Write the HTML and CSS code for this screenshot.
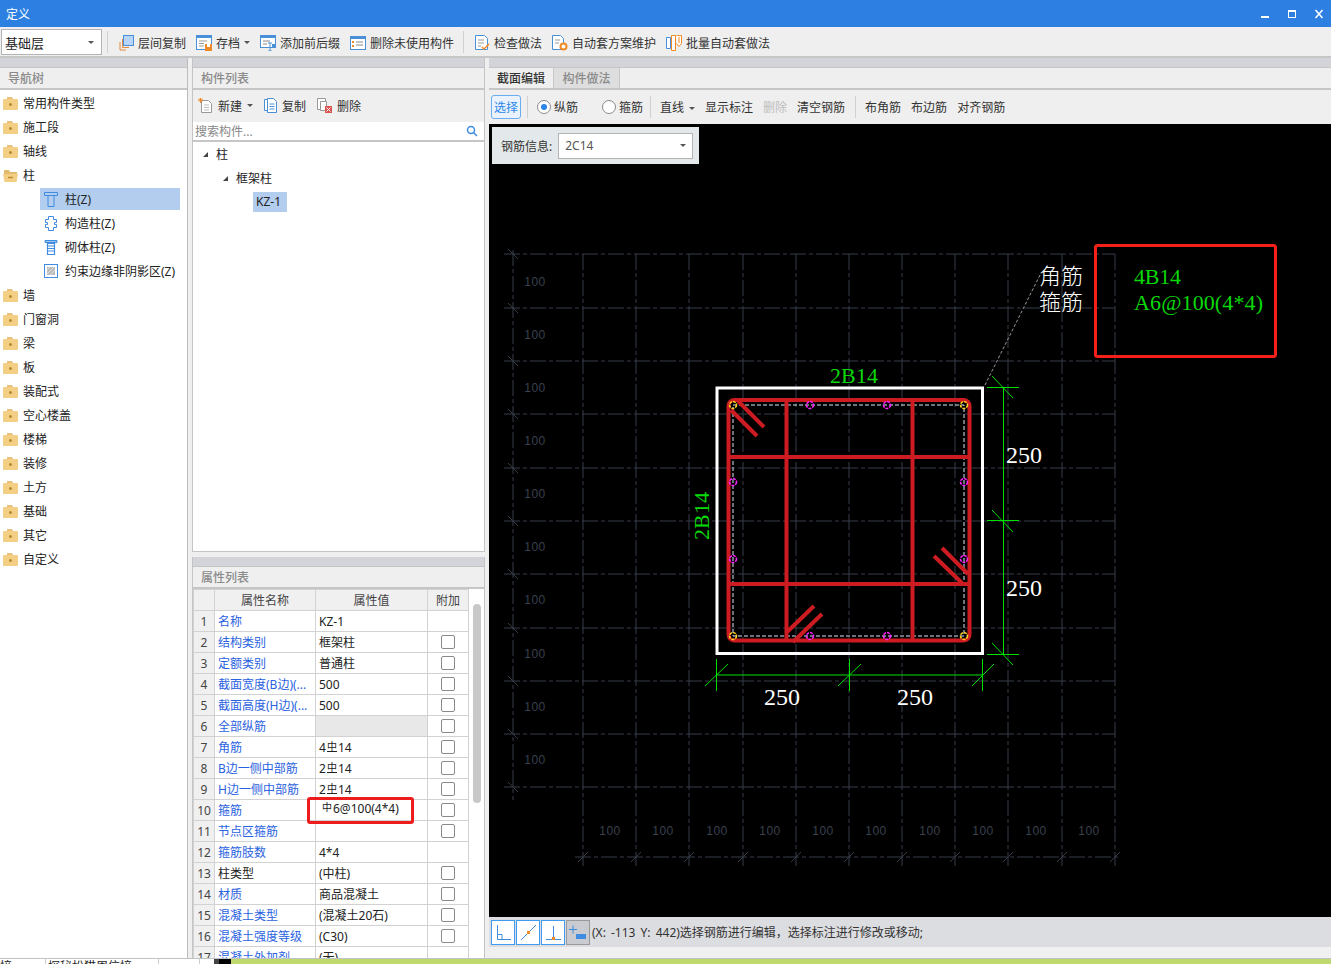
FILE: index.html
```html
<!DOCTYPE html>
<html lang="zh-CN">
<head>
    <meta charset="UTF-8">
    <title>定义</title>
    <link rel="stylesheet" href="styles.css">
</head>
<body>
    <!-- shared icons -->
    <svg class="defs" width="0" height="0">
        <symbol id="folder-plus" viewBox="0 0 15 13"><path d="M4 0h5l1 2H4z" fill="#e8c078"/><rect x="0" y="2" width="15" height="11" rx="1" fill="#f3cf86"/><path d="M6 7.500h3M7.500 6v3" stroke="#b98a2e" stroke-width="1.500"/></symbol>
        <symbol id="folder-minus" viewBox="0 0 15 13"><path d="M1 1h5l1 2h7v2H1z" fill="#e3b96e"/><path d="M0 5h15l-1.500 8h-12z" fill="#f3cf86"/><path d="M5 8.500h5" stroke="#b98a2e" stroke-width="1.500"/></symbol>
    </svg>

    <header class="titlebar">
        <span>定义</span>
        <div class="win-btns">
            <svg width="10" height="10" viewBox="0 0 10 10"><rect x="1" y="7" width="8" height="2" fill="#fff"/></svg>
            <svg width="10" height="10" viewBox="0 0 10 10"><rect x="1.500" y="1.500" width="7" height="7" fill="none" stroke="#fff"/><rect x="1" y="1" width="8" height="2" fill="#fff"/></svg>
            <svg width="10" height="10" viewBox="0 0 10 10"><path d="M1.500 1l7 8M8.500 1l-7 8" stroke="#fff" stroke-width="1.500"/></svg>
        </div>
    </header>

    <div class="main-toolbar">
        <div class="combo floor">基础层<i class="caret"></i></div>
        <span class="sep"></span>
        <div class="tool first">
            <svg width="15" height="16" viewBox="0 0 15 16"><path d="M3.500 4v8.500H10M1 7v8h6" fill="none" stroke="#e58a3c"/><rect x="4.500" y="0.500" width="10" height="10" fill="#b8d4f6" stroke="#4a90d9"/></svg>
            层间复制
        </div>
        <div class="tool">
            <svg width="16" height="16" viewBox="0 0 16 16"><rect x="0.500" y="0.500" width="15" height="14" fill="#fff" stroke="#4a90d9"/><rect x="0" y="0" width="16" height="3" fill="#4a90d9"/><path d="M3 6h8M3 8.500h5M3 11h5" stroke="#999"/><rect x="9" y="9" width="7" height="7" fill="#f08a24"/><rect x="11" y="9" width="3" height="3" fill="#fff"/></svg>
            存档<i class="caret"></i>
        </div>
        <div class="tool">
            <svg width="16" height="16" viewBox="0 0 16 16"><rect x="0.500" y="0.500" width="15" height="12" fill="#fff" stroke="#4a90d9"/><rect x="0" y="0" width="16" height="3" fill="#4a90d9"/><path d="M3 6h7M3 9h4" stroke="#888"/><path d="M8 8h4M10 8v8M8 16h4" stroke="#4a90d9"/><rect x="12" y="9" width="4" height="4" fill="#4a90d9"/></svg>
            添加前后缀
        </div>
        <div class="tool">
            <svg width="16" height="14" viewBox="0 0 16 14"><rect x="0.500" y="0.500" width="15" height="13" fill="#fff" stroke="#4a90d9"/><rect x="0" y="0" width="16" height="3" fill="#4a90d9"/><path d="M6 6h7M6 9h7" stroke="#888"/><rect x="2" y="5" width="2" height="2" fill="#f08a24"/><rect x="2" y="9" width="2" height="2" fill="#f08a24"/></svg>
            删除未使用构件
        </div>
        <span class="sep sep-tight"></span>
        <div class="tool first">
            <svg width="15" height="16" viewBox="0 0 15 16"><path d="M0.500 0.500h9l3 3v11h-12z" fill="#fff" stroke="#4a90d9"/><path d="M3 5h6M3 8h6M3 11h3" stroke="#999"/><path d="M7 12l2 2 5-5" fill="none" stroke="#f08a24" stroke-width="1.500"/></svg>
            检查做法
        </div>
        <div class="tool">
            <svg width="16" height="16" viewBox="0 0 16 16"><path d="M0.500 0.500h8l3 3v11h-11z" fill="#fff" stroke="#4a90d9"/><path d="M3 5h5M3 8h4" stroke="#999"/><circle cx="11.500" cy="11.500" r="3" fill="#fff" stroke="#f08a24" stroke-width="2"/></svg>
            自动套方案维护
        </div>
        <div class="tool">
            <svg width="16" height="16" viewBox="0 0 16 16"><path d="M0.500 2.500h4v11h-4z" fill="#fff" stroke="#4a90d9"/><path d="M5.500 0.500h4v15h-4z" fill="#fff" stroke="#f08a24"/><path d="M10.500 0.500h5v8l-2.500 3-2.500-3" fill="#fff" stroke="#f08a24"/><path d="M13 2v6" stroke="#f08a24"/></svg>
            批量自动套做法
        </div>
    </div>

    <div class="workspace">
        <aside class="col-nav">
            <div class="strip"></div>
            <div class="panel-title">导航树</div>
            <ul class="nav-tree">
                <li><svg class="fold" width="15" height="13"><use href="#folder-plus"/></svg>常用构件类型</li>
                <li><svg class="fold" width="15" height="13"><use href="#folder-plus"/></svg>施工段</li>
                <li><svg class="fold" width="15" height="13"><use href="#folder-plus"/></svg>轴线</li>
                <li><svg class="fold" width="15" height="13"><use href="#folder-minus"/></svg>柱</li>
                <li class="child"><div class="child-in selected">
                    <svg width="14" height="15" viewBox="0 0 14 15"><path d="M0.500 0.500h13v3h-13zM3.500 3.500h7M4 3.500v11h6v-11" fill="none" stroke="#3f8ce0"/></svg>柱(Z)</div></li>
                <li class="child"><div class="child-in">
                    <svg width="14" height="15" viewBox="0 0 14 15"><path d="M4.500 0.500h5v3h3v3h-2v2h2v3h-3v3h-5v-3h-3v-3h2v-2h-2v-3h3z" fill="#fff" stroke="#3f8ce0"/></svg>构造柱(Z)</div></li>
                <li class="child"><div class="child-in">
                    <svg width="14" height="15" viewBox="0 0 14 15"><path d="M1 1h12M3.500 3.500h7v11h-7z" fill="none" stroke="#3f8ce0" stroke-width="1.200"/><path d="M1 0.500h12v2H1zM4 6h6M4 8.500h6M4 11h6" fill="none" stroke="#3f8ce0"/></svg>砌体柱(Z)</div></li>
                <li class="child"><div class="child-in">
                    <svg width="14" height="14" viewBox="0 0 14 14"><rect x="0.500" y="0.500" width="13" height="13" fill="#fff" stroke="#3f8ce0"/><rect x="3" y="3" width="8" height="8" fill="#bbb"/><path d="M3 6l3-3M3 10l7-7M6 11l5-5" stroke="#eee" stroke-width="0.700"/></svg>约束边缘非阴影区(Z)</div></li>
                <li><svg class="fold" width="15" height="13"><use href="#folder-plus"/></svg>墙</li>
                <li><svg class="fold" width="15" height="13"><use href="#folder-plus"/></svg>门窗洞</li>
                <li><svg class="fold" width="15" height="13"><use href="#folder-plus"/></svg>梁</li>
                <li><svg class="fold" width="15" height="13"><use href="#folder-plus"/></svg>板</li>
                <li><svg class="fold" width="15" height="13"><use href="#folder-plus"/></svg>装配式</li>
                <li><svg class="fold" width="15" height="13"><use href="#folder-plus"/></svg>空心楼盖</li>
                <li><svg class="fold" width="15" height="13"><use href="#folder-plus"/></svg>楼梯</li>
                <li><svg class="fold" width="15" height="13"><use href="#folder-plus"/></svg>装修</li>
                <li><svg class="fold" width="15" height="13"><use href="#folder-plus"/></svg>土方</li>
                <li><svg class="fold" width="15" height="13"><use href="#folder-plus"/></svg>基础</li>
                <li><svg class="fold" width="15" height="13"><use href="#folder-plus"/></svg>其它</li>
                <li><svg class="fold" width="15" height="13"><use href="#folder-plus"/></svg>自定义</li>
            </ul>
        </aside>

        <section class="col-mid">
            <div class="list-panel">
                <div class="strip"></div>
                <div class="panel-title">构件列表</div>
                <div class="list-tools">
                    <div class="tool">
                        <svg width="15" height="15" viewBox="0 0 15 15"><path d="M3.500 2.500h7l3 3v9h-10z" fill="#fff" stroke="#999"/><path d="M6 7h5M6 9.500h5M6 12h5" stroke="#bbb"/><path d="M0 2h5M2.500 0v5M1 .5l3 3M4 .5l-3 3" stroke="#f08a24"/></svg>
                        新建<i class="caret"></i>
                    </div>
                    <div class="tool">
                        <svg width="13" height="15" viewBox="0 0 13 15"><path d="M0.500 1.500h3v11h-3z" fill="#fff" stroke="#4a90d9"/><path d="M3.500 0.500h6l3 3v11h-9z" fill="#fff" stroke="#4a90d9"/><path d="M5.500 6h5M5.500 8.500h5M5.500 11h5" stroke="#4a90d9"/></svg>
                        复制
                    </div>
                    <div class="tool">
                        <svg width="15" height="15" viewBox="0 0 15 15"><path d="M0.500 0.500h8v11h-8z" fill="#fff" stroke="#999"/><path d="M3.500 3.500h6v9h-6z" fill="#fff" stroke="#999"/><rect x="8" y="8" width="7" height="7" fill="#d9534f"/><path d="M9.500 9.500l4 4M13.500 9.500l-4 4" stroke="#fff"/></svg>
                        删除
                    </div>
                </div>
                <div class="search">
                    <span>搜索构件...</span>
                    <svg width="12" height="12" viewBox="0 0 12 12"><circle cx="5" cy="5" r="3.500" fill="none" stroke="#3f8ce0" stroke-width="1.500"/><path d="M7.500 7.500l3.500 3.500" stroke="#3f8ce0" stroke-width="1.500"/></svg>
                </div>
                <ul class="part-tree">
                    <li class="lv1"><i class="tri"></i>柱</li>
                    <li class="lv2"><i class="tri"></i>框架柱</li>
                    <li class="lv3"><span class="selected">KZ-1</span></li>
                </ul>
            </div>

            <div class="attr-panel">
                <div class="strip"></div>
                <div class="panel-title">属性列表</div>
                <div class="attr-body">
                    <table class="attr-table">
                        <colgroup><col class="c-no"><col class="c-name"><col class="c-val"><col class="c-add"></colgroup>
                        <thead>
                            <tr><th></th><th>属性名称</th><th>属性值</th><th>附加</th></tr>
                        </thead>
                        <tbody>
                            <tr><td class="no">1</td><td class="link">名称</td><td>KZ-1</td><td></td></tr>
                            <tr><td class="no">2</td><td class="link">结构类别</td><td>框架柱</td><td><input type="checkbox"></td></tr>
                            <tr><td class="no">3</td><td class="link">定额类别</td><td>普通柱</td><td><input type="checkbox"></td></tr>
                            <tr><td class="no">4</td><td class="link">截面宽度(B边)(...</td><td>500</td><td><input type="checkbox"></td></tr>
                            <tr><td class="no">5</td><td class="link">截面高度(H边)(...</td><td>500</td><td><input type="checkbox"></td></tr>
                            <tr><td class="no">6</td><td class="link">全部纵筋</td><td class="off"></td><td><input type="checkbox"></td></tr>
                            <tr><td class="no">7</td><td class="link">角筋</td><td>4<span class="bar-b">中</span>14</td><td><input type="checkbox"></td></tr>
                            <tr><td class="no">8</td><td class="link">B边一侧中部筋</td><td>2<span class="bar-b">中</span>14</td><td><input type="checkbox"></td></tr>
                            <tr><td class="no">9</td><td class="link">H边一侧中部筋</td><td>2<span class="bar-b">中</span>14</td><td><input type="checkbox"></td></tr>
                            <tr><td class="no">10</td><td class="link">箍筋</td><td class="raised"><span class="bar-a">中</span>6@100(4*4)</td><td><input type="checkbox"></td></tr>
                            <tr><td class="no">11</td><td class="link">节点区箍筋</td><td></td><td><input type="checkbox"></td></tr>
                            <tr><td class="no">12</td><td class="link">箍筋肢数</td><td>4*4</td><td></td></tr>
                            <tr><td class="no">13</td><td>柱类型</td><td>(中柱)</td><td><input type="checkbox"></td></tr>
                            <tr><td class="no">14</td><td class="link">材质</td><td>商品混凝土</td><td><input type="checkbox"></td></tr>
                            <tr><td class="no">15</td><td class="link">混凝土类型</td><td>(混凝土20石)</td><td><input type="checkbox"></td></tr>
                            <tr><td class="no">16</td><td class="link">混凝土强度等级</td><td>(C30)</td><td><input type="checkbox"></td></tr>
                            <tr><td class="no">17</td><td class="link">混凝土外加剂</td><td>(无)</td><td></td></tr>
                        </tbody>
                    </table>
                    <div class="hl-box"></div>
                    <div class="scroll-thumb"></div>
                </div>
            </div>
        </section>

        <section class="col-edit">
            <div class="strip"></div>
            <div class="tabs">
                <div class="tab active">截面编辑</div>
                <div class="tab">构件做法</div>
            </div>
            <div class="edit-tools">
                <button class="btn-select">选择</button>
                <span class="sep"></span>
                <label class="radio w-first"><i class="dot on"></i>纵筋</label>
                <label class="radio"><i class="dot"></i>箍筋</label>
                <span class="sep"></span>
                <div class="cmd">直线<i class="caret"></i></div>
                <div class="cmd">显示标注</div>
                <div class="cmd disabled">删除</div>
                <div class="cmd">清空钢筋</div>
                <span class="sep sep-flush"></span>
                <div class="cmd">布角筋</div>
                <div class="cmd">布边筋</div>
                <div class="cmd">对齐钢筋</div>
            </div>

            <div class="canvas">
                <svg class="drawing" viewBox="489 124 842 793" width="842" height="793">
                    <!-- axis grid -->
                    <g class="grid">
                        <path d="M504 254H1115M504 308H1115M504 361H1115M504 414H1115M504 468H1115M504 521H1115M504 574H1115M504 628H1115M504 681H1115M504 734H1115M504 787H1115"/>
                        <path d="M513 250V800M583 254V866M636 254V866M689 254V866M743 254V866M796 254V866M849 254V866M902 254V866M955 254V866M1008 254V866M1062 254V866M1115 254V866"/>
                        <path d="M575 857H1118"/>
                    </g>
                    <path class="ticks" d="M508 249l10 10M508 303l10 10M508 356l10 10M508 409l10 10M508 463l10 10M508 516l10 10M508 569l10 10M508 623l10 10M508 676l10 10M508 729l10 10M508 782l10 10M578 862l10-10M631 862l10-10M684 862l10-10M738 862l10-10M791 862l10-10M844 862l10-10M897 862l10-10M950 862l10-10M1003 862l10-10M1057 862l10-10M1110 862l10-10"/>
                    <g class="grid-num">
                        <text x="535" y="286">100</text><text x="535" y="339">100</text><text x="535" y="392">100</text><text x="535" y="445">100</text><text x="535" y="498">100</text><text x="535" y="551">100</text><text x="535" y="604">100</text><text x="535" y="658">100</text><text x="535" y="711">100</text><text x="535" y="764">100</text>
                        <text x="610" y="835">100</text><text x="663" y="835">100</text><text x="717" y="835">100</text><text x="770" y="835">100</text><text x="823" y="835">100</text><text x="876" y="835">100</text><text x="930" y="835">100</text><text x="983" y="835">100</text><text x="1036" y="835">100</text><text x="1089" y="835">100</text>
                    </g>

                    <!-- section -->
                    <rect class="outline" x="717" y="388" width="265.500" height="265.500"/>
                    <rect class="cover" x="733" y="405" width="231" height="231"/>
                    <g class="rebar">
                        <rect x="728.500" y="400" width="241" height="240.500" rx="6"/>
                        <path d="M786.500 400V640M912.500 400V640M728 457H970M728 584H970"/>
                        <path d="M738 401l26 26M731 410l26 26"/>
                        <path d="M942 548l26 26M934 556l28 27"/>
                        <path d="M787 632l27-26M793 642l29-28"/>
                    </g>
                    <g class="dots corner">
                        <circle cx="733" cy="405" r="3.500"/><circle cx="964" cy="405" r="3.500"/><circle cx="733" cy="636" r="3.500"/><circle cx="964" cy="636" r="3.500"/>
                    </g>
                    <g class="dots side">
                        <circle cx="810" cy="405" r="3.500"/><circle cx="887" cy="405" r="3.500"/><circle cx="810" cy="636" r="3.500"/><circle cx="887" cy="636" r="3.500"/><circle cx="733" cy="482" r="3.500"/><circle cx="964" cy="482" r="3.500"/><circle cx="733" cy="559" r="3.500"/><circle cx="964" cy="559" r="3.500"/>
                    </g>

                    <!-- dimensions -->
                    <path class="dim" d="M1003.500 387V654M987 387.500H1019M987 520.500H1019M987 654.500H1019M992 376l21 22M992 510l21 22M992 643l21 22M716 675H983M716.500 659V691M849.500 659V691M982.500 659V691M705 686l23-22M838 686l23-22M972 686l22-22"/>
                    <text class="dim-w" x="782" y="705" text-anchor="middle">250</text>
                    <text class="dim-w" x="915" y="705" text-anchor="middle">250</text>
                    <text class="dim-w" x="1006" y="463">250</text>
                    <text class="dim-w" x="1006" y="596">250</text>
                    <text class="dim-g" x="830" y="383" textLength="48">2B14</text>
                    <text class="dim-g" transform="translate(709,540) rotate(-90)" textLength="48">2B14</text>

                    <!-- leader and note -->
                    <path class="leader" d="M985 385L1040 275"/>
                    <text class="note"><tspan x="1039" y="284">角筋</tspan><tspan x="1039" y="310">箍筋</tspan></text>
                    <text class="dim-g"><tspan x="1134" y="284" textLength="47">4B14</tspan><tspan x="1134" y="310" textLength="129">A6@100(4*4)</tspan></text>
                    <rect class="callout" x="1095.500" y="245.500" width="180" height="111" rx="2"/>
                </svg>
                <div class="bar-info">
                    <span>钢筋信息:</span>
                    <div class="combo bar-combo">2C14<i class="caret"></i></div>
                </div>
            </div>

            <div class="status">
                <div class="snap">
                    <svg width="24" height="25" viewBox="0 0 24 25"><path d="M6.500 5V19.500H20M6.500 14.500H11V19.500" fill="none" stroke="#3f8ce0"/></svg>
                </div>
                <div class="snap">
                    <svg width="24" height="25" viewBox="0 0 24 25"><path d="M5 20L20 5" stroke="#3f8ce0"/><rect x="11" y="11" width="3" height="3" fill="#f08a24"/></svg>
                </div>
                <div class="snap">
                    <svg width="24" height="25" viewBox="0 0 24 25"><path d="M12.500 6V19.500M5 19.500H20" stroke="#3f8ce0"/><rect x="11" y="17" width="3" height="3" fill="#f08a24"/></svg>
                </div>
                <div class="snap snap-on">
                    <svg width="24" height="25" viewBox="0 0 24 25"><path d="M3 9.500H11M7 5.500V13.500" stroke="#3f8ce0"/><rect x="10" y="14" width="10" height="5" fill="#3f8ce0"/></svg>
                </div>
                <span class="status-text">(X: -113 Y: 442)选择钢筋进行编辑，选择标注进行修改或移动;</span>
            </div>
            <div class="status-pad"></div>
        </section>
    </div>

    <footer class="taskbar">
        <div class="task-white">
            <span class="t1">信接</span>
            <span class="t2">探秘松猫周信接...</span>
            <span class="t3"></span>
        </div>
        <div class="task-dark"></div>
    </footer>
</body>
</html>
```

FILE: styles.css
```css
* {
    margin: 0;
    padding: 0;
    box-sizing: border-box;
}

html, body {
    width: 1331px;
    height: 964px;
    overflow: hidden;
}

body {
    display: flex;
    flex-direction: column;
    font-family: "Noto Sans", "Noto Sans CJK SC", "Liberation Sans", sans-serif;
    font-size: 12px;
    color: #333;
    background: #efefef;
}

ul {
    list-style: none;
}

.defs {
    position: absolute;
}

/* title bar */
.titlebar {
    height: 27px;
    flex: none;
    background: #2d7fe2;
    color: #fff;
    display: flex;
    align-items: center;
    justify-content: space-between;
    padding: 0 7px 0 6px;
}

.win-btns {
    display: flex;
    gap: 17px;
}

/* top toolbar */
.main-toolbar {
    height: 31px;
    flex: none;
    display: flex;
    align-items: center;
    padding: 1px 0 0 1px;
    border-bottom: 2px solid #c6c6c6;
    background: #efefef;
}

.sep {
    width: 1px;
    height: 22px;
    background: #d0d0d0;
    flex: none;
}

.main-toolbar .sep {
    margin: 0 11px 0 5px;
}

.main-toolbar .sep-tight {
    margin-left: -1px;
}

.tool {
    display: flex;
    align-items: center;
    gap: 4px;
    margin-right: 10px;
    padding-top: 1px;
    white-space: nowrap;
}

.caret {
    display: inline-block;
    width: 0;
    height: 0;
    border: 3px solid transparent;
    border-top: 3px solid #555;
    border-bottom: 0;
}

.combo {
    display: flex;
    align-items: center;
    justify-content: space-between;
    background: #fff;
    border: 1px solid #b4b4b4;
}

.floor {
    width: 101px;
    height: 26px;
    padding: 0 7px 0 3px;
    font-size: 13px;
    color: #222;
}

/* workspace columns */
.workspace {
    flex: 1;
    min-height: 0;
    display: flex;
}

.col-nav {
    width: 188px;
    flex: none;
    display: flex;
    flex-direction: column;
    border-right: 1px solid #bdbdbd;
}

.col-mid {
    width: 293px;
    margin-left: 4px;
    flex: none;
    display: flex;
    flex-direction: column;
    gap: 5px;
}

.col-edit {
    width: 842px;
    margin-left: 4px;
    flex: none;
    display: flex;
    flex-direction: column;
}

.strip {
    height: 10px;
    flex: none;
    background: #d3d4d9;
    border-bottom: 1px solid #c4c4c4;
}

.panel-title {
    height: 22px;
    flex: none;
    padding: 0 0 0 8px;
    line-height: 22px;
    color: #8b8b8b;
    font-weight: 500;
    border-bottom: 2px solid #c6c6c6;
    background: #efefef;
}

/* navigation tree */
.nav-tree {
    flex: 1;
    background: #fff;
    padding-top: 1px;
}

.nav-tree li {
    height: 24px;
    display: flex;
    align-items: center;
    gap: 5px;
    padding-left: 3px;
    color: #222;
}

.nav-tree li.child {
    padding-left: 40px;
}

.child-in {
    width: 140px;
    height: 22px;
    padding-left: 4px;
    display: flex;
    align-items: center;
    gap: 7px;
    white-space: nowrap;
}

.selected {
    background: #b2cdee;
}

/* part list */
.list-panel {
    height: 494px;
    flex: none;
    display: flex;
    flex-direction: column;
    border: solid #c4c4c4;
    border-width: 0 1px 1px;
}

.list-tools {
    height: 31px;
    flex: none;
    display: flex;
    align-items: center;
    padding-left: 5px;
    gap: 2px;
}

.list-tools .tool {
    gap: 5px;
    margin-right: 9px;
    padding-top: 0;
}

.search {
    height: 20px;
    flex: none;
    margin-top: 1px;
    background: #fff;
    border-bottom: 2px solid #c6c6c6;
    display: flex;
    align-items: center;
    justify-content: space-between;
    padding: 0 6px 0 2px;
    color: #888;
}

.part-tree {
    flex: 1;
    background: #fff;
    color: #222;
}

.part-tree li {
    height: 24px;
    display: flex;
    align-items: center;
}

.tri {
    width: 0;
    height: 0;
    margin-right: 8px;
    border-left: 5px solid transparent;
    border-bottom: 5px solid #444;
}

.lv1 {
    padding-left: 10px;
}

.lv2 {
    padding-left: 30px;
}

.lv3 {
    padding-left: 60px;
}

.lv3 .selected {
    width: 34px;
    height: 20px;
    line-height: 20px;
    padding-left: 3px;
}

/* attribute table */
.attr-panel {
    flex: 1;
    min-height: 0;
    display: flex;
    flex-direction: column;
    border: solid #c4c4c4;
    border-width: 0 1px;
}

.attr-body {
    flex: 1;
    min-height: 0;
    position: relative;
    overflow: hidden;
    background: #fff;
}

.attr-table {
    width: 275px;
    table-layout: fixed;
    border-collapse: collapse;
    color: #222;
}

.c-no { width: 21px; }
.c-name { width: 101px; }
.c-val { width: 112px; }
.c-add { width: 41px; }

.attr-table th,
.attr-table td {
    height: 21px;
    border: 1px solid #d2d2d2;
    padding: 0 0 0 3px;
    white-space: nowrap;
    overflow: hidden;
    font-weight: 400;
}

.attr-table th {
    background: #f0f0f0;
    text-align: center;
    padding: 0;
    color: #444;
}

.attr-table td.no {
    background: #f0f0f0;
    text-align: center;
    padding: 0;
    color: #444;
}

.attr-table td.link {
    color: #2a62e0;
}

.attr-table td.off {
    background: #e8e8e8;
}

.attr-table td:last-child {
    padding: 0;
}

.attr-table td.raised {
    padding-left: 5px;
    padding-bottom: 3px;
}

.attr-table input {
    appearance: none;
    display: block;
    width: 14px;
    height: 14px;
    margin: 0 auto;
    background: #fff;
    border: 1px solid #8a8a8a;
    border-radius: 2px;
}

.bar-b,
.bar-a {
    display: inline-block;
    font-size: 10px;
    line-height: 10px;
    margin: 0 1px;
    vertical-align: 2px;
}

.bar-b {
    border-bottom: 1px solid #222;
    height: 11px;
}

.hl-box {
    position: absolute;
    left: 114px;
    top: 208px;
    width: 107px;
    height: 27px;
    border: 3px solid #ee1c1c;
    border-radius: 3px;
}

.scroll-thumb {
    position: absolute;
    left: 280px;
    top: 15px;
    width: 8px;
    height: 199px;
    border-radius: 4px;
    background: #c8c8c8;
}

/* section editor */
.tabs {
    height: 22px;
    flex: none;
    display: flex;
    border-bottom: 2px solid #c6c6c6;
}

.tab {
    width: 66px;
    text-align: center;
    line-height: 21px;
    font-weight: 500;
    color: #8b8b8b;
    background: #dedede;
    border-right: 1px solid #c8c8c8;
}

.tab.active {
    width: 65px;
    color: #333;
    background: #efefef;
}

.edit-tools {
    height: 34px;
    flex: none;
    display: flex;
    align-items: center;
    padding-left: 2px;
    color: #333;
}

.edit-tools .sep {
    margin: 0 9px 0 6px;
}

.edit-tools .sep-flush {
    margin-left: 0;
}

.btn-select {
    width: 30px;
    height: 24px;
    font: inherit;
    color: #2a86e8;
    background: #eaf3fd;
    border: 1px solid #6aaef0;
    border-radius: 3px;
}

.radio {
    display: flex;
    align-items: center;
    gap: 3px;
    margin-right: 1px;
}

.radio.w-first {
    margin-right: 24px;
}

.dot {
    width: 14px;
    height: 14px;
    border-radius: 50%;
    border: 1px solid #8a8a8a;
    background: #fff;
    position: relative;
}

.dot.on::after {
    content: "";
    position: absolute;
    left: 3px;
    top: 3px;
    width: 6px;
    height: 6px;
    border-radius: 50%;
    background: #2a86e8;
}

.cmd {
    margin-right: 10px;
    white-space: nowrap;
}

.cmd .caret {
    margin-left: 5px;
    vertical-align: 2px;
}

.disabled {
    color: #bdbdbd;
}

.canvas {
    flex: 1;
    min-height: 0;
    position: relative;
    background: #000;
}

.drawing {
    display: block;
}

.grid path {
    fill: none;
    stroke: #363c4a;
    stroke-dasharray: 16 3 4 3;
}

.ticks {
    fill: none;
    stroke: #363c4a;
}

.grid-num text {
    font-family: "Liberation Sans", sans-serif;
    font-size: 12px;
    letter-spacing: 0.5px;
    fill: #3a404e;
    text-anchor: middle;
}

.outline {
    fill: none;
    stroke: #fff;
    stroke-width: 3;
}

.cover {
    fill: none;
    stroke: #d8e6f5;
    stroke-dasharray: 4 2;
}

.rebar {
    fill: none;
    stroke: #cc1c22;
    stroke-width: 4;
}

.dots circle {
    fill: none;
    stroke-width: 1.600;
    stroke-dasharray: 3 1;
}

.corner circle {
    stroke: #ffd21f;
}

.side circle {
    stroke: #ff20ff;
}

.dim {
    fill: none;
    stroke: #00e000;
}

.dim-w {
    font-family: "Liberation Serif", serif;
    font-size: 24px;
    fill: #fff;
}

.dim-g {
    font-family: "Liberation Serif", serif;
    font-size: 22px;
    fill: #0ad80a;
}

.note {
    font-size: 22px;
    font-weight: 300;
    fill: #fff;
}

.leader {
    fill: none;
    stroke: #9a9a9a;
    stroke-dasharray: 3 2;
}

.callout {
    fill: none;
    stroke: #f5201a;
    stroke-width: 3;
}

.bar-info {
    position: absolute;
    left: 3px;
    top: 3px;
    width: 207px;
    height: 37px;
    background: #e3e9ea;
    display: flex;
    align-items: center;
    gap: 6px;
    padding-left: 9px;
    color: #333;
}

.bar-combo {
    width: 135px;
    height: 26px;
    padding: 0 6px;
    color: #555;
}

/* status bar */
.status {
    height: 30px;
    flex: none;
    background: #dcdde0;
    display: flex;
    align-items: center;
    padding-left: 2px;
    gap: 1px;
}

.snap {
    width: 24px;
    height: 25px;
    background: #fff;
    outline: 1px solid #3f9bf0;
    outline-offset: -1px;
}

.snap svg {
    display: block;
}

.snap-on {
    background: #c9cbd0;
    outline-color: #999;
}

.status-text {
    margin-left: 1px;
    color: #333;
    word-spacing: 2px;
    white-space: nowrap;
}

.status-pad {
    height: 11px;
    flex: none;
    background: #f0f0f0;
}

/* cut off strip at the bottom of the window */
.taskbar {
    height: 6px;
    flex: none;
    display: flex;
    border-top: 1px solid #bfc2c6;
    background: #bfd96e;
    overflow: hidden;
}

.task-white {
    width: 214px;
    background: #fff;
    position: relative;
    overflow: hidden;
    line-height: 16px;
    color: #222;
}

.t1 {
    position: absolute;
    left: -12px;
    top: 0;
    white-space: nowrap;
}

.t2 {
    position: absolute;
    left: 45px;
    top: 0;
    width: 114px;
    height: 16px;
    padding-left: 2px;
    border: solid #ccc;
    border-width: 0 1px;
    white-space: nowrap;
}

.t3 {
    position: absolute;
    left: 199px;
    top: 0;
    width: 1px;
    height: 16px;
    background: #ccc;
}

.task-dark {
    width: 17px;
    background: linear-gradient(90deg, #444 0 5px, #000 5px);
}
```
